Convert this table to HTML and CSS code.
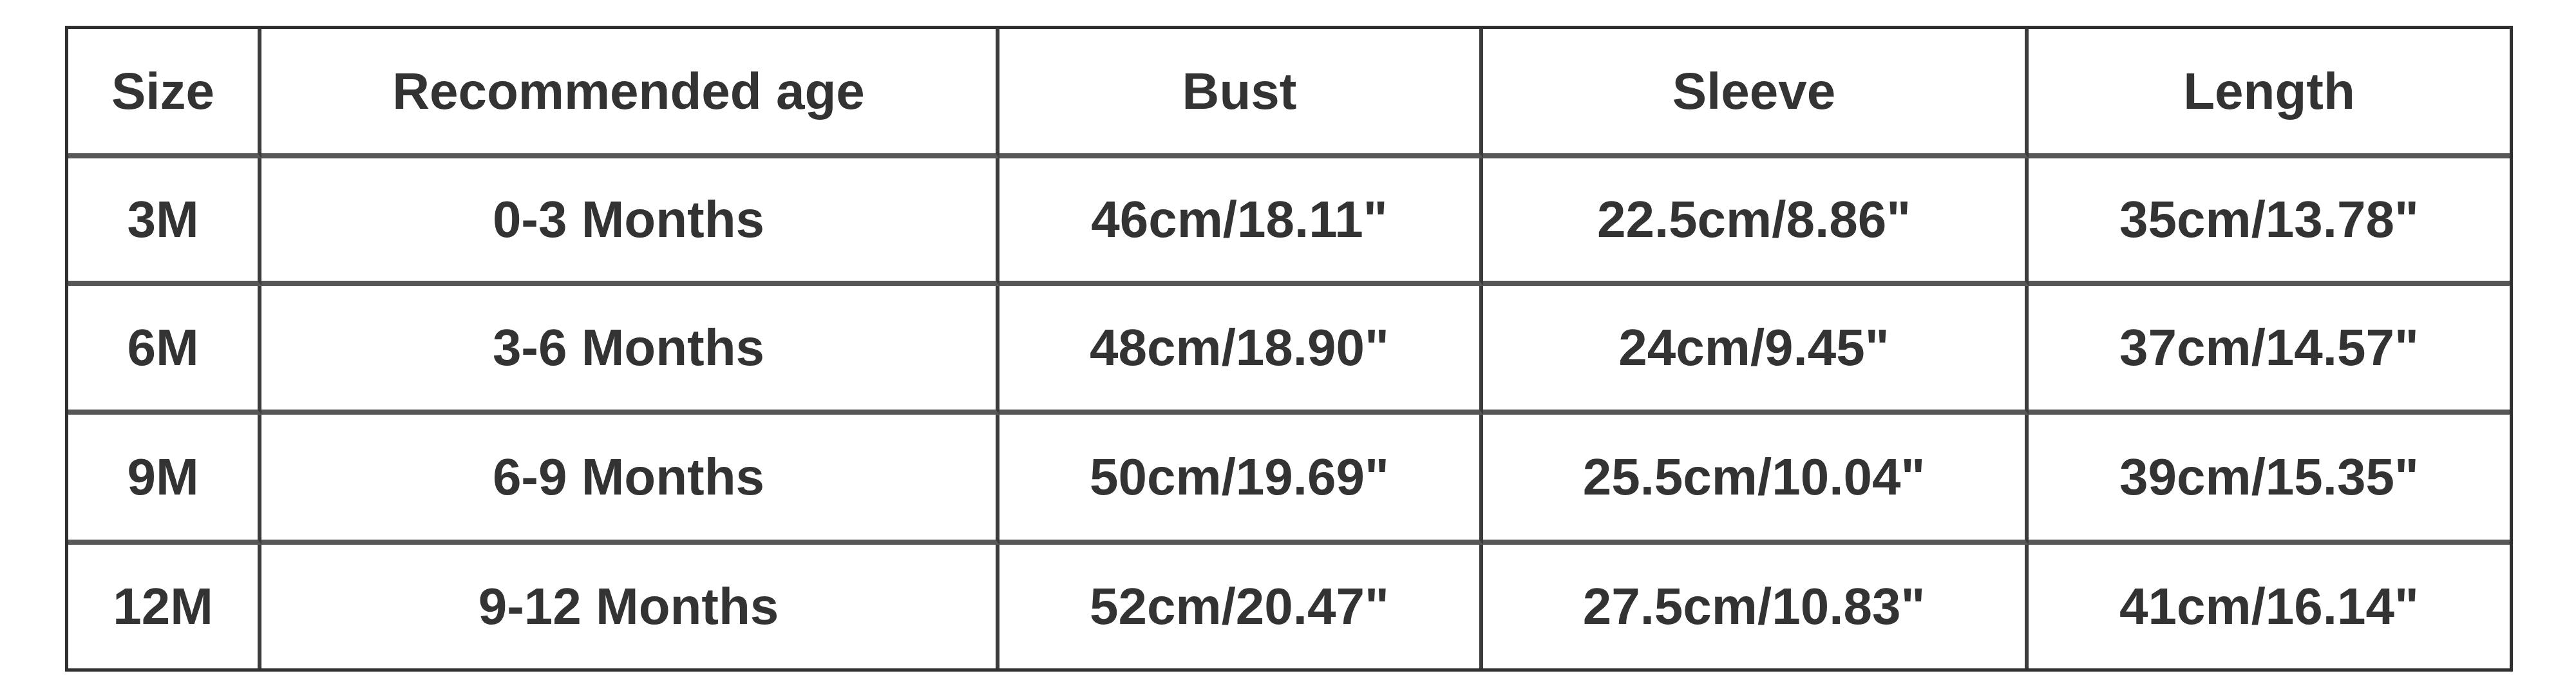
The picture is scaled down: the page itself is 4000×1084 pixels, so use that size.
FILE: index.html
```html
<!DOCTYPE html>
<html lang="en">
<head>
<meta charset="utf-8">
<title>Size chart</title>
<link rel="stylesheet" href="styles.css">
</head>
<body>
<div class="page">
  <div class="chart">
    <div class="cell">Size</div>
    <div class="cell">Recommended age</div>
    <div class="cell">Bust</div>
    <div class="cell">Sleeve</div>
    <div class="cell">Length</div>

    <div class="cell">3M</div>
    <div class="cell">0-3 Months</div>
    <div class="cell">46cm/18.11"</div>
    <div class="cell">22.5cm/8.86"</div>
    <div class="cell">35cm/13.78"</div>

    <div class="cell">6M</div>
    <div class="cell">3-6 Months</div>
    <div class="cell">48cm/18.90"</div>
    <div class="cell">24cm/9.45"</div>
    <div class="cell">37cm/14.57"</div>

    <div class="cell">9M</div>
    <div class="cell">6-9 Months</div>
    <div class="cell">50cm/19.69"</div>
    <div class="cell">25.5cm/10.04"</div>
    <div class="cell">39cm/15.35"</div>

    <div class="cell">12M</div>
    <div class="cell">9-12 Months</div>
    <div class="cell">52cm/20.47"</div>
    <div class="cell">27.5cm/10.83"</div>
    <div class="cell">41cm/16.14"</div>
  </div>
</div>
</body>
</html>
```
FILE: styles.css
```css
html, body {
  margin: 0;
  padding: 0;
  background: #ffffff;
}

.page {
  padding: 40px 0 0 101px;
}

.chart {
  display: grid;
  width: 3791px;
  grid-template-columns: 300px 1146px 751px 847px 747px;
  grid-template-rows: 201px 198px 200px 202px 192px;
  border: 5px solid #303030;
  font-family: "Liberation Sans", Arial, sans-serif;
  font-weight: bold;
  font-size: 80px;
  line-height: 1;
  color: #333333;
}

.cell {
  display: flex;
  align-items: center;
  justify-content: center;
  white-space: nowrap;
  border-right: 6px solid #3c3c3c;
  border-bottom: 8px solid #575757;
  background: #ffffff;
}

.cell:nth-child(5n) {
  border-right: none;
}

.cell:nth-last-child(-n+5) {
  border-bottom: none;
}
```
